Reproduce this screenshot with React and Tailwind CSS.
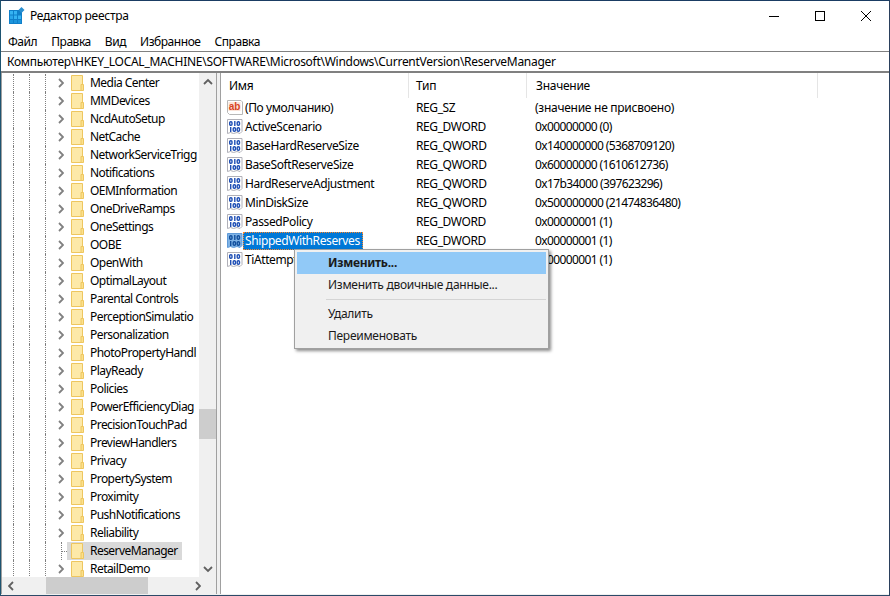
const font = { fontFamily: '"Noto Sans", "Open Sans", sans-serif', letterSpacing: '-0.27px' };

const tree = ['Media Center','MMDevices','NcdAutoSetup','NetCache','NetworkServiceTrigg','Notifications','OEMInformation','OneDriveRamps','OneSettings','OOBE','OpenWith','OptimalLayout','Parental Controls','PerceptionSimulatio','Personalization','PhotoPropertyHandl','PlayReady','Policies','PowerEfficiencyDiag','PrecisionTouchPad','PreviewHandlers','Privacy','PropertySystem','Proximity','PushNotifications','Reliability','ReserveManager','RetailDemo'];

const values = [
  ['(По умолчанию)','REG_SZ','(значение не присвоено)','ab'],
  ['ActiveScenario','REG_DWORD','0x00000000 (0)'],
  ['BaseHardReserveSize','REG_QWORD','0x140000000 (5368709120)'],
  ['BaseSoftReserveSize','REG_QWORD','0x60000000 (1610612736)'],
  ['HardReserveAdjustment','REG_QWORD','0x17b34000 (397623296)'],
  ['MinDiskSize','REG_QWORD','0x500000000 (21474836480)'],
  ['PassedPolicy','REG_DWORD','0x00000001 (1)'],
  ['ShippedWithReserves','REG_DWORD','0x00000001 (1)'],
  ['TiAttemptedProvisioning','REG_DWORD','0x00000001 (1)'],
];

function Chevron({ dir = 'right', className = '', color = '#808080' }) {
  const d = { right: 'M1 1l4 4-4 4', left: 'M5 1L1 5l4 4', up: 'M1 6l4-4 4 4', down: 'M1 2l4 4 4-4' }[dir];
  const wide = dir === 'up' || dir === 'down';
  return (
    <svg width={wide ? 10 : 6} height={wide ? 8 : 10} viewBox={wide ? '0 0 10 8' : '0 0 6 10'} className={`shrink-0 ${className}`}>
      <path d={d} fill="none" stroke={color} strokeWidth="1.8" />
    </svg>
  );
}

function Folder() {
  return (
    <svg width="13" height="16" viewBox="0 0 13 16" className="shrink-0">
      <path d="M.5.5h11v15H.5z" fill="#fde9a8" stroke="#eec65f" />
      <path d="M10 9.500h2.500v6H10z" fill="#fbe08c" stroke="#eec65f" />
    </svg>
  );
}

function RegIcon({ kind, selected }) {
  if (kind === 'ab') {
    return (
      <svg width="16" height="16" viewBox="0 0 16 16" className="shrink-0">
        <path d="M.5.500h13.500l1.500 1.500v12.500h-13l-2-2z" fill="#fff" stroke="#b8b8b8" />
        <rect x="1.500" y="2" width="12" height="9" fill="#fbe3d8" />
        <text x="1.800" y="9.800" fontSize="10" fontWeight="700" letterSpacing="0" fill="#d8431f" fontFamily="Liberation Sans, sans-serif">ab</text>
      </svg>
    );
  }
  const blue = selected ? '#124f9c' : '#1f4fb5';
  return (
    <svg width="16" height="16" viewBox="0 0 16 16" className="shrink-0">
      <path d="M.5.500h14.500v12l-2 2-3-1-3.500 1-3-1-3 1z" fill={selected ? '#7fb3e6' : '#fff'} stroke={selected ? '#5f9ad8' : '#b0b0b8'} />
      <g fill="none" stroke={blue} strokeWidth="1.400">
        <rect x="2.700" y="2.700" width="2.300" height="3.600" rx="1" />
        <path d="M7.800 2v5" />
        <rect x="10.200" y="2.700" width="2.300" height="3.600" rx="1" />
        <path d="M3.700 8v5" />
        <rect x="6.200" y="8.700" width="2.300" height="3.600" rx="1" />
        <rect x="10.200" y="8.700" width="2.300" height="3.600" rx="1" />
      </g>
    </svg>
  );
}

function TreeRow({ name }) {
  const selected = name === 'ReserveManager';
  return (
    <div className="flex h-[18px] w-[197px] items-center">
      <span className="ml-[11px] h-full w-[16px] shrink-0 border-l border-dotted border-[#808080]" />
      <span className="h-full w-[16px] shrink-0 border-l border-dotted border-[#808080]" />
      <span className="flex h-full w-[21px] shrink-0 items-center border-l border-dotted border-[#808080]">
        {!selected && <span className="ml-[12px] flex items-center"><Chevron /></span>}
      </span>
      {selected ? (
        <span className="-ml-[5px] flex h-full w-[6px] shrink-0 items-center border-l border-dotted border-[#808080]">
          <span className="w-[5px] border-t border-dotted border-[#808080]" />
        </span>
      ) : (
        <span className="w-[1px] shrink-0" />
      )}
      <span className={`flex h-full shrink-0 items-center ${selected ? 'bg-[#d9d9d9]' : ''}`}>
        <span className="flex h-full items-center pl-[4px]"><Folder /></span>
        <span className="pl-[6px] pr-[4px] pb-[1px] whitespace-nowrap text-[12px] leading-[17px] tracking-[-0.55px] text-black">{name}</span>
      </span>
    </div>
  );
}

function ValueRow({ row }) {
  const selected = row[0] === 'ShippedWithReserves';
  return (
    <div className="flex h-[19px] items-center text-[12px] text-black">
      <div className="flex w-[188px] shrink-0 items-center pl-[6px]">
        <RegIcon kind={row[3]} selected={selected} />
        <span className={`whitespace-nowrap pl-[2px] pr-[3px] leading-[18px] tracking-[-0.4px] ${selected ? 'bg-[#0078d7] text-white outline-1 -outline-offset-1 outline-dotted outline-[#ff8728]' : ''}`}>{row[0]}</span>
      </div>
      <div className="w-[118px] shrink-0 pl-[7px] tracking-[-0.4px]">{row[1]}</div>
      <div className={`pl-[8px] whitespace-nowrap ${row[3] ? '' : 'tracking-[-0.62px]'}`}>{row[2]}</div>
    </div>
  );
}

function MenuItem({ children, active, bold }) {
  return (
    <div className={`flex h-[22px] items-center pl-[31px] text-[12px] text-[#1a1a1a] ${active ? 'bg-[#91c9f7]' : ''} ${bold ? 'font-bold' : ''}`}>{children}</div>
  );
}

export default function App() {
  return (
    <div style={font} className="relative flex h-[596px] w-[890px] flex-col overflow-hidden border border-t-[#1a3c63] border-r-[#2a3f5c] border-b-[#2c4a68] border-l-[#1e5470] bg-white">
      <header className="flex h-[30px] shrink-0 items-center">
        <svg width="16" height="18" viewBox="0 0 16 18" className="ml-[8px] shrink-0">
          <rect x="0" y="3" width="13" height="14" fill="#0f7fc9" />
          <g fill="#35b3f2">
            <rect x="1" y="4" width="3" height="3.500" /><rect x="5" y="4" width="3" height="3.500" />
            <rect x="1" y="8.500" width="3" height="3.500" fill="#2aa6ea" /><rect x="5" y="8.500" width="3" height="3.500" /><rect x="9" y="8.500" width="3" height="3.500" />
            <rect x="1" y="13" width="3" height="3" fill="#1c95dc" /><rect x="5" y="13" width="3" height="3" fill="#1c95dc" /><rect x="9" y="13" width="3" height="3" fill="#1c95dc" />
          </g>
          <path d="M12.500 0l3 3-3 3-3-3z" fill="#2a8fd0" />
        </svg>
        <span className="ml-[5px] text-[12px] text-black">Редактор реестра</span>
        <div className="ml-auto flex items-center">
          <svg width="46" height="30" viewBox="0 0 46 30"><path d="M18 15.500h10" stroke="#000" /></svg>
          <svg width="46" height="30" viewBox="0 0 46 30"><rect x="18.500" y="10.500" width="9" height="9" fill="none" stroke="#000" /></svg>
          <svg width="46" height="30" viewBox="0 0 46 30"><path d="M18 10l10 10M28 10L18 20" stroke="#000" fill="none" /></svg>
        </div>
      </header>

      <nav className="flex h-[20px] shrink-0 items-center gap-[14px] pl-[7px] pt-[1px] text-[12px] tracking-[-0.45px] text-black">
        <span>Файл</span><span>Правка</span><span>Вид</span><span>Избранное</span><span>Справка</span>
      </nav>

      <div className="flex h-[22px] shrink-0 items-center border-t border-b-2 border-[#808080] pl-[6px] text-[12px] text-black whitespace-nowrap">
        Компьютер\HKEY_LOCAL_MACHINE\SOFTWARE\Microsoft\Windows\CurrentVersion\ReserveManager
      </div>

      <main className="flex min-h-0 flex-1 bg-[#f0f0f0] pb-[1px]">
        <section className="relative flex w-[216px] shrink-0 flex-col border-x border-[#a0a0a0] bg-white">
          <div className="flex min-h-0 flex-1">
            <div className="min-w-0 flex-1 overflow-hidden pt-[1px]">
              {tree.map((n) => <TreeRow key={n} name={n} />)}
            </div>
            <div className="flex w-[17px] shrink-0 flex-col bg-[#f0f0f0]">
              <div className="flex h-[17px] items-center justify-center"><Chevron dir="up" color="#606060" /></div>
              <div className="flex-1 pt-[319px]"><div className="h-[30px] bg-[#cdcdcd]" /></div>
              <div className="flex h-[17px] items-center justify-center"><Chevron dir="down" color="#606060" /></div>
            </div>
          </div>
          <div className="flex h-[17px] shrink-0 items-center bg-[#f0f0f0]">
            <div className="flex h-full w-[17px] items-center justify-center"><Chevron dir="left" color="#606060" /></div>
            <div className="ml-[27px] h-full w-[102px] bg-[#cdcdcd]" />
            <div className="ml-auto flex h-full w-[36px] items-center justify-center"><Chevron dir="right" color="#606060" /></div>
          </div>
        </section>

        <section className="ml-[3px] min-w-0 flex-1 border-l border-[#a0a0a0] bg-white">
          <div className="flex h-[25px] items-center text-[12px] text-black">
            <div className="h-full w-[188px] border-r border-[#e5e5e5] pl-[8px] leading-[25px]">Имя</div>
            <div className="h-full w-[118px] border-r border-[#e5e5e5] pl-[7px] leading-[25px]">Тип</div>
            <div className="h-full w-[291px] border-r border-[#e5e5e5] pl-[9px] leading-[25px]">Значение</div>
          </div>
          <div>
            {values.map((r) => <ValueRow key={r[0]} row={r} />)}
          </div>
        </section>
      </main>

      <div className="absolute left-[293px] top-[248px] h-[100px] w-[255px] border border-[#a0a0a0] bg-[#f0f0f0] p-[2px] shadow-[2px_2px_3px_rgba(0,0,0,0.45)]">
        <MenuItem active bold>Изменить...</MenuItem>
        <MenuItem>Изменить двоичные данные...</MenuItem>
        <div className="my-[3px] ml-[29px] border-t border-[#d4d4d4]" />
        <MenuItem>Удалить</MenuItem>
        <MenuItem>Переименовать</MenuItem>
      </div>
    </div>
  );
}
